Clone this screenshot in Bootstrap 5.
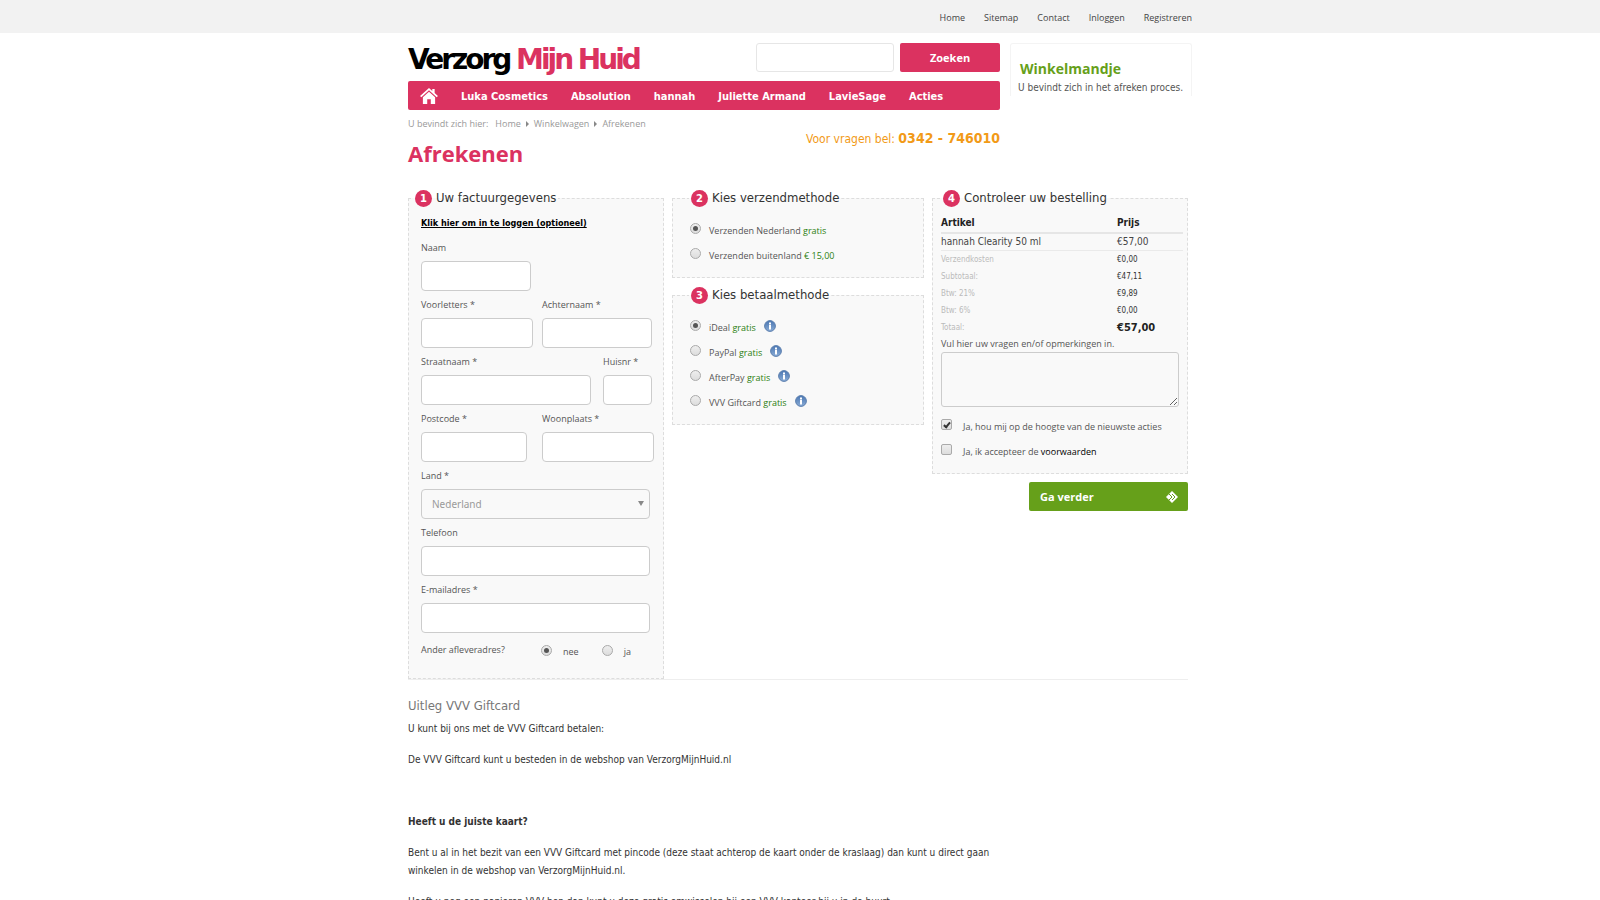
<!DOCTYPE html>
<html lang="nl">
<head>
<meta charset="utf-8">
<meta name="viewport" content="width=device-width, initial-scale=1">
<title>Afrekenen - Verzorg Mijn Huid</title>
<link href="https://cdn.jsdelivr.net/npm/bootstrap@5.3.0/dist/css/bootstrap.min.css" rel="stylesheet">
<script src="https://cdn.jsdelivr.net/npm/bootstrap@5.3.0/dist/js/bootstrap.bundle.min.js"></script>
<style>
  :root { --pink: #db3260; --green: #66a01a; --orange: #f29a17; }
  body { font-family: "DejaVu Sans Condensed", "Noto Sans", sans-serif; font-size: 10px; line-height: 18px; color: #333; background: #fff; }
  a { color: inherit; text-decoration: none; }
  .page-wrap { max-width: 784px; }
  .top-bar { background: #f2f2f2; font-family: "Open Sans", sans-serif; font-size: 9px; color: #444; height: 33px; padding-top: 2px; }
  .top-links { gap: 19px; }
  .site-head { padding-top: 10px; gap: 10px; }
  .side-box { width: 182px; }
  .logo-text { font: 700 28px/29px "DejaVu Sans", sans-serif; letter-spacing: -3px; color: #000; padding-top: 2px; }
  .logo-text span { color: var(--pink); }
  .search-box { width: 138px; height: 29px; margin-right: 6px; border: 1px solid #e6e6e6; border-radius: 3px; font-size: 11px; }
  .search-btn { width: 100px; height: 29px; border-radius: 2px; background: var(--pink); color: #fff; font: 700 11px/18px "Open Sans", sans-serif; }
  .search-btn:hover, .next-btn:hover { color: #fff; background: #444; }
  .main-nav { height: 29px; margin-top: 7px; background: var(--pink); border-radius: 2px; color: #fff; font: 700 11px/29px "DejaVu Sans Condensed", sans-serif; gap: 23px; padding: 1px 0 0 12px; }
  .cart-box { height: 53px; border: 1px solid #f4f4f4; border-bottom: 0; border-radius: 3px 3px 0 0; padding: 15px 0 0 7px; color: #555; white-space: nowrap; }
  .cart-title { color: var(--green); font: 700 14px/20px "Open Sans", sans-serif; margin: 0 0 0 2px; }
  .crumbs { font-family: "Open Sans", sans-serif; font-size: 9px; color: #999; gap: 5px; padding-top: 5px; }
  .crumbs .crumb-lead { margin-right: 2px; }
  .crumb-arrow { border: 3px solid transparent; border-left-color: #888; border-right: 0; }
  .page-title { color: var(--pink); font: 700 22px/28px "Open Sans", sans-serif; margin: 6px 0 0; }
  .phone { color: var(--orange); font-size: 12px; padding-top: 19px; }
  .phone b { font: 700 14px/18px "DejaVu Sans Condensed", sans-serif; }
  .checkout { border-bottom: 1px solid #eee; width: 100%; max-width: 780px; gap: 8px; margin-top: 22px; }
  .step { border: 1px dashed #ddd; background: #f9f9f9; min-width: 0; }
  .step legend { font-size: 13px; line-height: 18px; color: #333; width: auto; margin: 0; padding: 0 2px; gap: 4px; }
  .step-no { width: 17px; height: 17px; border-radius: 50%; background: var(--pink); color: #fff; font: 700 10px/17px "DejaVu Sans", sans-serif; text-align: center; }
  .col-form { flex: 256 1 0; } .col-methods { flex: 252 1 0; } .col-order { flex: 256 1 0; }
  .form-step { padding: 0 9px 0 12px; min-height: 490px; }
  .form-step legend { margin-left: -8px; }
  .login-link { font: 700 9px/18px "DejaVu Sans Condensed", sans-serif; color: #000; text-decoration: underline; margin: 7px 0 2px; }
  .field-row { display: grid; grid-template-columns: 121px 1fr; }
  .street-row { grid-template-columns: 182px 1fr; }
  .full-row { grid-template-columns: 1fr; }
  .field-row label, .small-text { font-family: "Open Sans", sans-serif; font-size: 9px; color: #555; }
  .field-row label { display: block; line-height: 27px; }
  .text-field { display: block; height: 30px; border: 1px solid #ccc; border-radius: 4px; background: #fff; }
  .w-a { width: 110px; } .w-b { width: 112px; } .w-c { width: 106px; } .w-d { width: 170px; } .w-e { width: 49px; } .w-f { width: 229px; }
  .land-wrap { position: relative; width: 229px; }
  .land { appearance: none; width: 100%; height: 30px; border: 1px solid #ccc; border-radius: 4px; background: #f9f9f9; padding: 0 10px; color: #999; font: 10px/18px "Noto Sans", sans-serif; }
  .land-arrow { position: absolute; right: 6px; top: 12px; border: 3px solid transparent; border-top: 5px solid #888; border-bottom: 0; pointer-events: none; }
  .tick { appearance: none; flex: none; width: 11px; height: 11px; margin: 0; border: 1px solid #aaa; background: linear-gradient(#eee, #ddd); display: grid; place-items: center; }
  .tick[type=radio] { border-radius: 50%; }
  .tick[type=checkbox] { border-radius: 2px; }
  .tick[type=radio]:checked::before { content: ""; width: 5px; height: 5px; border-radius: 50%; background: #555; }
  .tick[type=checkbox]:checked::before { content: ""; width: 4px; height: 7px; border: solid #333; border-width: 0 2px 2px 0; transform: rotate(40deg); }
  .choice { height: 25px; gap: 8px; }
  .choice label, .other-row label { padding-top: 4px; }
  .other-row { display: grid; grid-template-columns: 120px 1fr; padding-top: 8px; }
  .other-choice { height: 18px; gap: 11px; }
  .other-choice label { margin-right: 12px; }
  .free { color: #2c8010; }
  .method-step { padding: 9px 0 11px 17px; }
  .method-step legend { margin-left: -1px; }
  .method-step + .method-step { margin-top: 8px; }
  .order-step { padding: 0 4px 9px 8px; min-height: 285px; }
  .order-table { width: 100%; margin-top: 7px; line-height: 16px; }
  .order-table th, .order-table td { padding: 0; }
  .order-table th { color: #222; line-height: 18px; }
  .order-table thead tr { border-bottom: 2px solid #e6e6e6; }
  .order-table .item td { border-bottom: 1px solid #eaeaea; color: #444; }
  .order-table .sum { font-size: 8px; line-height: 17px; }
  .order-table .sum td:first-child { color: #bbb; }
  .order-table .total { font-size: 11px; font-weight: 700; color: #222; }
  .price-col { width: 66px; }
  .remarks-label { line-height: 16px; }
  .remarks { display: block; width: 238px; max-width: 100%; height: 55px; background: #f9f9f9; border: 1px solid #ccc; border-radius: 3px; margin-bottom: 5px; }
  .order-step .choice { gap: 11px; }
  .next-btn { width: 159px; height: 29px; margin-top: 8px; background: var(--green); color: #fff; border-radius: 2px; padding: 0 10px 0 11px; font: 700 11px/18px "Open Sans", sans-serif; }
  .info-text { max-width: 592px; padding-top: 16px; }
  .info-text h2 { font-size: 13px; line-height: 20px; color: #777; font-weight: 400; margin: 0 0 4px; }
  .info-text p { margin: 0 0 13px; }
</style>
</head>
<body class="overflow-x-hidden">
<div class="top-bar">
  <nav class="page-wrap container-fluid p-0 h-100 d-flex justify-content-end align-items-center top-links" aria-label="Service">
    <a href="#">Home</a><a href="#">Sitemap</a><a href="#">Contact</a><a href="#">Inloggen</a><a href="#">Registreren</a>
  </nav>
</div>
<div class="page-wrap container-fluid p-0">
  <header class="site-head d-flex">
    <div class="flex-grow-1">
      <div class="d-flex align-items-start">
        <a href="#" class="logo-text me-auto text-nowrap">Verzorg <span>Mijn Huid</span></a>
        <input class="search-box" type="search" aria-label="Zoeken">
        <button class="search-btn btn p-0 border-0" type="button">Zoeken</button>
      </div>
      <nav class="main-nav d-flex align-items-center" aria-label="Hoofdmenu">
        <a href="#" aria-label="Home" class="d-flex"><svg width="18" height="16" viewBox="0 0 19 17" fill="#fff"><path d="M9.500 0 0 8.500l1.300 1.300L9.500 2.500l8.200 7.300L19 8.500 15.500 5.300V1h-2.500v2.100z"/><path d="M9.500 4 3 9.700V17h4.600v-5h3.800v5H16V9.700z"/></svg></a>
        <a href="#">Luka Cosmetics</a><a href="#">Absolution</a><a href="#">hannah</a><a href="#">Juliette Armand</a><a href="#">LavieSage</a><a href="#">Acties</a>
      </nav>
      <div class="d-flex justify-content-between">
        <div>
          <div class="crumbs d-flex align-items-center"><span class="crumb-lead">U bevindt zich hier:</span><a href="#">Home</a><i class="crumb-arrow"></i><a href="#">Winkelwagen</a><i class="crumb-arrow"></i><a href="#">Afrekenen</a></div>
          <h1 class="page-title">Afrekenen</h1>
        </div>
        <div class="phone">Voor vragen bel: <b>0342 - 746010</b></div>
      </div>
    </div>
    <aside class="side-box flex-shrink-0"><div class="cart-box"><h2 class="cart-title">Winkelmandje</h2>U bevindt zich in het afreken proces.</div></aside>
  </header>

  <form class="checkout d-flex align-items-start">
    <div class="col-form">
      <fieldset class="step form-step">
        <legend class="float-none d-flex align-items-center"><span class="step-no">1</span>Uw factuurgegevens</legend>
        <a href="#" class="login-link d-block">Klik hier om in te loggen (optioneel)</a>
        <div class="field-row"><div><label for="naam">Naam</label><input id="naam" class="text-field w-a"></div></div>
        <div class="field-row"><div><label for="voor">Voorletters *</label><input id="voor" class="text-field w-b"></div><div><label for="achter">Achternaam *</label><input id="achter" class="text-field w-a"></div></div>
        <div class="field-row street-row"><div><label for="straat">Straatnaam *</label><input id="straat" class="text-field w-d"></div><div><label for="huis">Huisnr *</label><input id="huis" class="text-field w-e"></div></div>
        <div class="field-row"><div><label for="post">Postcode *</label><input id="post" class="text-field w-c"></div><div><label for="plaats">Woonplaats *</label><input id="plaats" class="text-field w-b"></div></div>
        <div class="field-row full-row"><div><label for="land">Land *</label><div class="land-wrap"><select id="land" class="land"><option>Nederland</option></select><i class="land-arrow"></i></div></div></div>
        <div class="field-row full-row"><div><label for="tel">Telefoon</label><input id="tel" type="tel" class="text-field w-f"></div></div>
        <div class="field-row full-row"><div><label for="mail">E-mailadres *</label><input id="mail" type="email" class="text-field w-f"></div></div>
        <div class="other-row small-text"><span>Ander afleveradres?</span>
          <div class="other-choice d-flex align-items-center"><input class="tick" type="radio" name="adres" id="nee" checked><label for="nee">nee</label><input class="tick" type="radio" name="adres" id="ja"><label for="ja">ja</label></div></div>
      </fieldset>
    </div>
    <div class="col-methods">
      <fieldset class="step method-step">
        <legend class="float-none d-flex align-items-center"><span class="step-no">2</span>Kies verzendmethode</legend>
        <div class="choice small-text d-flex align-items-center"><input class="tick" type="radio" name="verzend" id="nl" checked><label for="nl">Verzenden Nederland <span class="free">gratis</span></label></div>
        <div class="choice small-text d-flex align-items-center"><input class="tick" type="radio" name="verzend" id="bl"><label for="bl">Verzenden buitenland <span class="free">€ 15,00</span></label></div>
      </fieldset>
      <fieldset class="step method-step">
        <legend class="float-none d-flex align-items-center"><span class="step-no">3</span>Kies betaalmethode</legend>
        <svg width="0" height="0" class="position-absolute"><defs><linearGradient id="blue" x2="0" y2="1"><stop stop-color="#4a76b2"/><stop offset="1" stop-color="#8aacd6"/></linearGradient><symbol id="info" viewBox="0 0 12 12"><circle cx="6" cy="6" r="5.400" fill="url(#blue)" stroke="#5c7fae"/><path d="M5 2.500h2v2H5zM5 5h2v4.500H5z" fill="#fff"/></symbol></defs></svg>
        <div class="choice small-text d-flex align-items-center"><input class="tick" type="radio" name="betaal" id="ideal" checked><label for="ideal">iDeal <span class="free">gratis</span></label><svg width="12" height="12"><use href="#info"/></svg></div>
        <div class="choice small-text d-flex align-items-center"><input class="tick" type="radio" name="betaal" id="paypal"><label for="paypal">PayPal <span class="free">gratis</span></label><svg width="12" height="12"><use href="#info"/></svg></div>
        <div class="choice small-text d-flex align-items-center"><input class="tick" type="radio" name="betaal" id="after"><label for="after">AfterPay <span class="free">gratis</span></label><svg width="12" height="12"><use href="#info"/></svg></div>
        <div class="choice small-text d-flex align-items-center"><input class="tick" type="radio" name="betaal" id="vvv"><label for="vvv">VVV Giftcard <span class="free">gratis</span></label><svg width="12" height="12"><use href="#info"/></svg></div>
      </fieldset>
    </div>
    <div class="col-order">
      <fieldset class="step order-step">
        <legend class="float-none d-flex align-items-center"><span class="step-no">4</span>Controleer uw bestelling</legend>
        <table class="order-table">
          <thead><tr><th>Artikel</th><th class="price-col">Prijs</th></tr></thead>
          <tbody>
            <tr class="item"><td>hannah Clearity 50 ml</td><td>€57,00</td></tr>
            <tr class="sum"><td>Verzendkosten</td><td>€0,00</td></tr>
            <tr class="sum"><td>Subtotaal:</td><td>€47,11</td></tr>
            <tr class="sum"><td>Btw: 21%</td><td>€9,89</td></tr>
            <tr class="sum"><td>Btw: 6%</td><td>€0,00</td></tr>
            <tr class="sum"><td>Totaal:</td><td class="total">€57,00</td></tr>
          </tbody>
        </table>
        <label for="vragen" class="small-text remarks-label d-block">Vul hier uw vragen en/of opmerkingen in.</label>
        <textarea id="vragen" class="remarks"></textarea>
        <div class="choice small-text d-flex align-items-center"><input class="tick" type="checkbox" id="acties" checked><label for="acties">Ja, hou mij op de hoogte van de nieuwste acties</label></div>
        <div class="choice small-text d-flex align-items-center"><input class="tick" type="checkbox" id="akkoord"><label for="akkoord">Ja, ik accepteer de <a href="#" class="text-black">voorwaarden</a></label></div>
      </fieldset>
      <button type="button" class="next-btn btn border-0 d-flex align-items-center justify-content-between ms-auto">Ga verder
        <svg width="12" height="12" viewBox="0 0 12 12"><path d="M6 0l6 6-6 6-6-6z" fill="#fff"/><path d="M3 3 6 6 3 9M6 3l3 3-3 3" fill="none" stroke="#66a01a"/></svg></button>
    </div>
  </form>

  <section class="info-text">
    <h2>Uitleg VVV Giftcard</h2>
    <p>U kunt bij ons met de VVV Giftcard betalen:</p>
    <p>De VVV Giftcard kunt u besteden in de webshop van VerzorgMijnHuid.nl</p>
    <p>&nbsp;</p>
    <p><b>Heeft u de juiste kaart?</b></p>
    <p>Bent u al in het bezit van een VVV Giftcard met pincode (deze staat achterop de kaart onder de kraslaag) dan kunt u direct gaan winkelen in de webshop van VerzorgMijnHuid.nl.</p>
    <p>Heeft u nog een papieren VVV bon dan kunt u deze gratis omwisselen bij een VVV kantoor bij u in de buurt.</p>
  </section>
</div>
</body>
</html>
